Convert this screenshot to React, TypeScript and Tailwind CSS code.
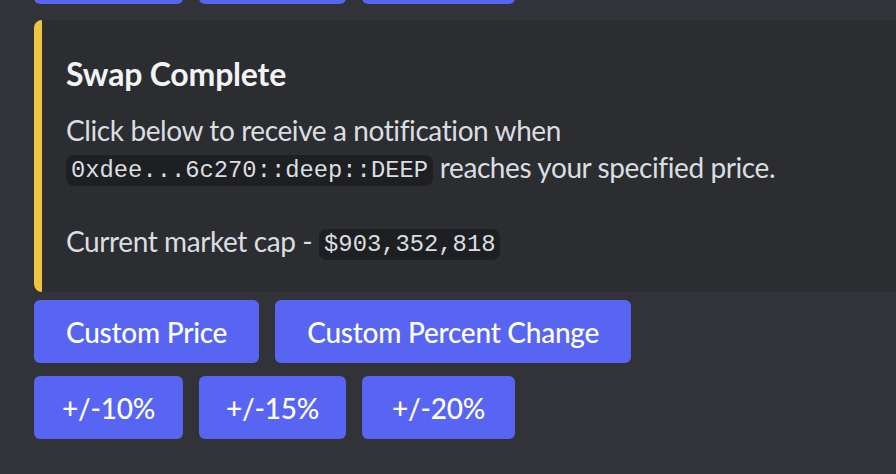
import React from "react";

const sans = { fontFamily: "Lato, 'Noto Sans', sans-serif" };

function Btn({ children, w }: { children: React.ReactNode; w?: string }) {
  return (
    <div
      className={
        "h-[63px] px-[32px] shrink-0 rounded-[6px] bg-[#5865f2] text-white text-[28px] font-medium tracking-[-0.25px] flex items-center justify-center " +
        (w ?? "")
      }
    >
      {children}
    </div>
  );
}

function Code({ children }: { children: React.ReactNode }) {
  return (
    <span
      className="inline-block rounded-[8px] bg-[#1e1f22] px-[5px] text-[23.8px] leading-[31px] tracking-normal text-[#dbdee1] align-[1px]"
      style={{ fontFamily: "'Liberation Mono', 'DejaVu Sans Mono', monospace" }}
    >
      {children}
    </span>
  );
}

function PercentRow() {
  return (
    <div className="flex gap-[16px]">
      <Btn w="w-[149px] px-0">+/-10%</Btn>
      <Btn w="w-[147px] px-0">+/-15%</Btn>
      <Btn w="w-[153px] px-0">+/-20%</Btn>
    </div>
  );
}

export default function App() {
  return (
    <div
      className="w-[896px] h-[474px] overflow-hidden bg-[#313338] pl-[34px]"
      style={sans}
    >
      <div className="h-[4px] overflow-hidden flex items-end">
        <PercentRow />
      </div>

      <div className="mt-[16px] w-[900px] shrink-0 flex rounded-[8px] bg-[#2b2d31] border-l-[8px] border-[#f0c443] pt-[16px] pl-[24px] pb-[32px]">
        <div className="flex flex-col">
          <div className="mt-[16px] h-[44px] text-[32px] leading-[44px] font-bold text-[#f2f3f5] tracking-[-0.2px]">
            Swap Complete
          </div>
          <div className="mt-[16px] text-[28px] leading-[37px] text-[#dbdee1] tracking-[-0.4px]">
            <div className="h-[37px]">Click below to receive a notification when</div>
            <div className="h-[37px]">
              <Code>0xdee...6c270::deep::DEEP</Code> reaches your specified price.
            </div>
            <div className="h-[37px]" />
            <div className="h-[37px]">
              Current market cap - <Code>$903,352,818</Code>
            </div>
          </div>
        </div>
      </div>

      <div className="mt-[8px] flex flex-col gap-[13px]">
        <div className="flex gap-[16px]">
          <Btn>Custom Price</Btn>
          <Btn>Custom Percent Change</Btn>
        </div>
        <PercentRow />
      </div>
    </div>
  );
}
